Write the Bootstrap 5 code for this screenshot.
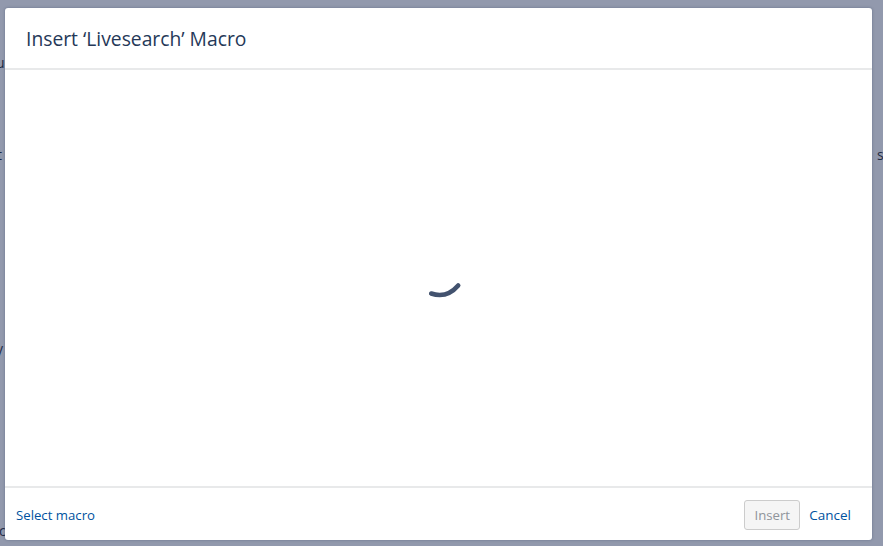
<!DOCTYPE html>
<html lang="en">
<head>
  <meta charset="UTF-8">
  <title>Insert Macro</title>
  <meta name="viewport" content="width=device-width, initial-scale=1">
  <link href="https://cdn.jsdelivr.net/npm/bootstrap@5.3.3/dist/css/bootstrap.min.css" rel="stylesheet">
  <script src="https://cdn.jsdelivr.net/npm/bootstrap@5.3.3/dist/js/bootstrap.bundle.min.js"></script>
  <style>
    html, body {
      height: 546px;
      overflow: hidden;
    }

    body {
      background-color: #9299ad;
      color: #172b4d;
      font-family: "Open Sans", "Noto Sans", "Liberation Sans", sans-serif;
      font-size: 14px;
    }

    .page-scrap {
      position: absolute;
      font-size: 14px;
      line-height: 16px;
      color: #1f2b45;
    }

    .macro-dialog {
      height: 546px;
      padding: 8px 11px 6px 5px;
    }

    .macro-box {
      height: 100%;
      border: 0;
      border-radius: 3px;
      box-shadow: 0 0 3px rgba(9, 30, 66, 0.3);
    }

    .macro-head {
      height: 62px;
      padding: 2px 21px 0;
      border-bottom: 2px solid #e8e9ea;
    }

    .macro-title {
      margin: 0;
      font-size: 19.3px;
      font-weight: 500;
      color: #253858;
    }

    .macro-foot {
      height: 54px;
      padding: 2px 21px 0 11px;
      border-top: 2px solid #e8e9ea;
    }

    .macro-foot a {
      margin-top: 2px;
      color: #0052a0;
      text-decoration: none;
      font-size: 13.2px;
    }

    .macro-foot .cancel-link {
      margin-left: 9px;
      margin-top: 0;
      font-size: 13.5px;
    }

    .btn-insert {
      width: 56px;
      height: 30px;
      padding: 1px 0 0;
      font-size: 13.2px;
      color: #8f949b;
      background-color: #f5f5f5;
      border: 1px solid #ccc;
      border-radius: 3px;
    }

    .btn-insert:disabled {
      color: #8f949b;
      background-color: #f5f5f5;
      border-color: #ccc;
      opacity: 1;
    }

    .spin-arc {
      width: 48px;
      height: 48px;
    }
  </style>
</head>
<body>
<!-- text of the page behind the dialog -->
<span class="page-scrap" style="left:-4px;top:55px">u</span>
<span class="page-scrap" style="left:-3px;top:147px">t</span>
<span class="page-scrap" style="left:877px;top:147px">s</span>
<span class="page-scrap" style="left:-4px;top:341px">y</span>
<span class="page-scrap" style="left:-1px;top:523px">c</span>

<div class="macro-dialog position-relative">
  <div class="modal-content macro-box bg-white d-flex flex-column">
    <div class="macro-head d-flex align-items-center">
      <h2 class="macro-title">Insert ‘Livesearch’ Macro</h2>
    </div>
    <div class="flex-grow-1 d-flex align-items-center justify-content-center">
      <svg class="spin-arc" viewBox="0 0 48 48" fill="none">
        <path d="M16.2 39.5C25 42.5 35 41 43.2 31.5" stroke="#42526e" stroke-width="4.6" stroke-linecap="round"/>
      </svg>
    </div>
    <div class="macro-foot d-flex align-items-center justify-content-between">
      <a href="#">Select macro</a>
      <div class="d-flex align-items-center">
        <button type="button" class="btn btn-insert" disabled>Insert</button>
        <a href="#" class="cancel-link">Cancel</a>
      </div>
    </div>
  </div>
</div>
</body>
</html>
